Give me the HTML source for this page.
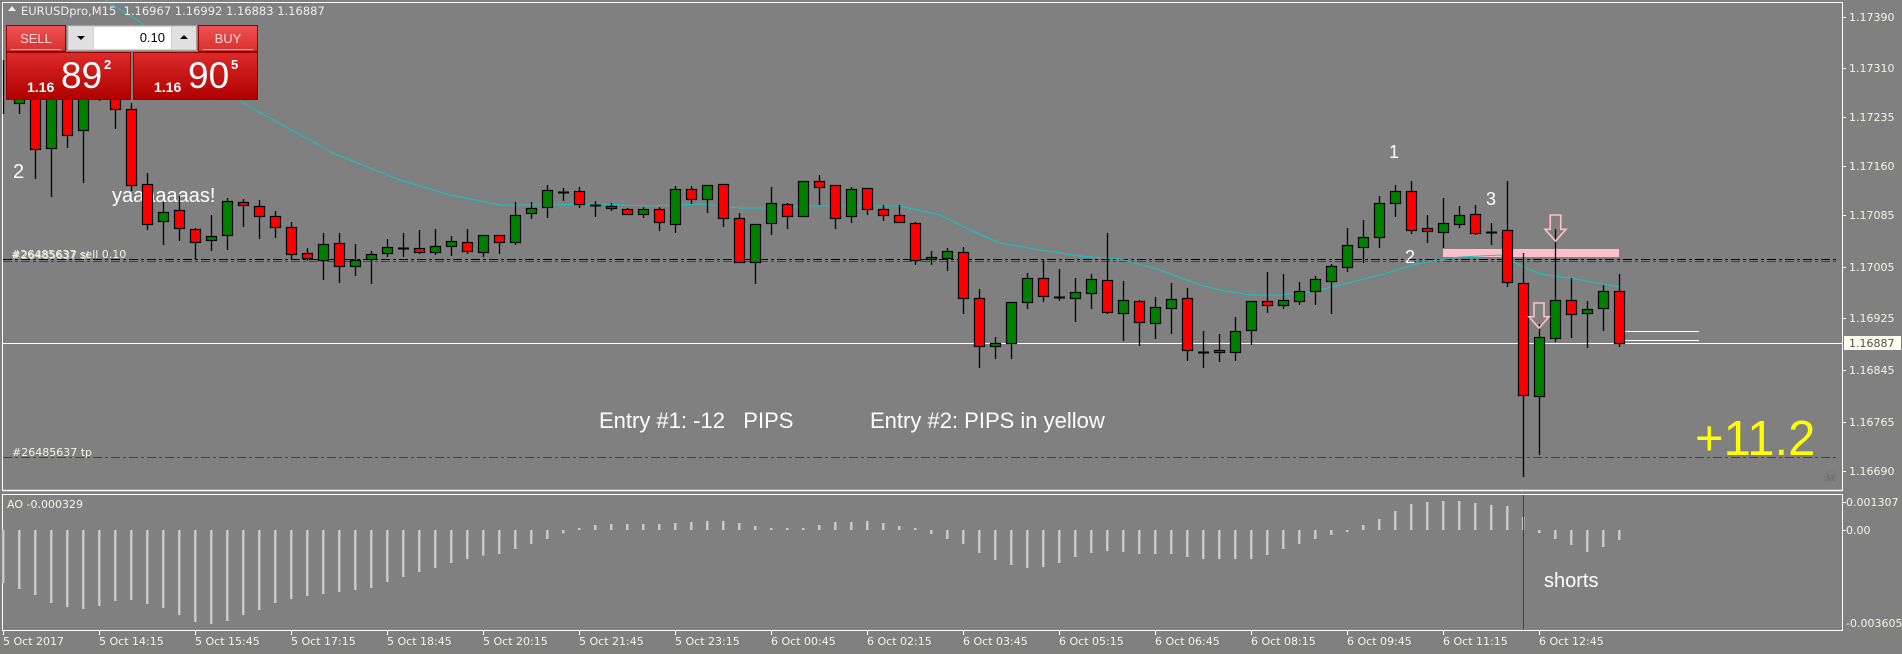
<!DOCTYPE html>
<html><head><meta charset="utf-8"><style>
html,body{margin:0;padding:0;background:#808080;}
body{width:1902px;height:654px;overflow:hidden;position:relative;font-family:"DejaVu Sans","Liberation Sans",sans-serif;}
svg{position:absolute;left:0;top:0;}
.ax{font-family:"DejaVu Sans",sans-serif;font-size:11px;fill:#f4f4e8;}
.w{font-family:"Liberation Sans",Arial,sans-serif;fill:#fff;}
#panel{position:absolute;left:6px;top:25px;width:252px;height:75px;}
.btn{position:absolute;top:0;height:27px;background:linear-gradient(#f05050,#d83030);color:#ffd8d8;font:13px "Liberation Sans",sans-serif;text-align:center;line-height:25px;border:1px solid #a00000;box-sizing:border-box;}
.btn i{position:absolute;left:4px;right:4px;bottom:1px;height:1px;background:#ffb0b0;}
.pr{position:absolute;top:27px;height:48px;background:linear-gradient(#dc2a2a,#b00000);border:1px solid #900;box-sizing:border-box;color:#fff;font-family:"Liberation Sans",sans-serif;}
.pr .s{position:absolute;left:20px;top:26px;font-size:14px;font-weight:bold;}
.pr .b{position:absolute;left:54px;top:2px;font-size:37px;}
.pr .e{position:absolute;left:97px;top:4px;font-size:13px;font-weight:bold;}
</style></head><body>
<svg id="s" width="1902" height="654" xmlns="http://www.w3.org/2000/svg">
<g id="under"></g>
<line x1="2.5" y1="2" x2="2.5" y2="491" stroke="#fff"/>
<line x1="2" y1="2.5" x2="1842" y2="2.5" stroke="#fff"/>
<line x1="1842.5" y1="2" x2="1842.5" y2="491" stroke="#fff"/>
<line x1="2" y1="490.5" x2="1843" y2="490.5" stroke="#fff" stroke-width="1.5"/>
<line x1="2.5" y1="494" x2="2.5" y2="630" stroke="#fff"/>
<line x1="2" y1="494.5" x2="1843" y2="494.5" stroke="#fff"/>
<line x1="1842.5" y1="494" x2="1842.5" y2="630" stroke="#fff"/>
<line x1="2" y1="630.5" x2="1843" y2="630.5" stroke="#fff"/>
<text class="w" x="13" y="178" font-size="20">2</text>
<text class="w" x="112" y="202" font-size="20">yaaaaaaas!</text>
<text class="w" x="1389" y="158" font-size="18">1</text>
<text class="w" x="1486" y="205" font-size="18">3</text>
<text class="w" x="1405" y="263" font-size="18">2</text>
<text class="ax" x="11" y="258" style="font-size:11px">#26485637 sell 0.10</text>
<text class="ax" x="12" y="259" style="font-size:11px;opacity:.8">#26485637 sl</text>
<text class="ax" x="12" y="456">#26485637 tp</text>
<text class="w" x="599" y="428" font-size="22" xml:space="preserve" style="white-space:pre">Entry #1: -12   PIPS</text>
<text class="w" x="870" y="428" font-size="22">Entry #2: PIPS in yellow</text>
<text x="1695" y="455" font-family="Liberation Sans,Arial,sans-serif" font-size="49" fill="#ffff00">+11.2</text>
<text x="1823" y="482" font-size="16" fill="#6a6a6a">☠</text>
<text class="ax" x="7" y="508">AO -0.000329</text>
<text class="w" x="1544" y="587" font-size="20">shorts</text>
<g class="ax">
<text x="1849" y="21">1.17390</text>
<text x="1849" y="72">1.17310</text>
<text x="1849" y="121">1.17235</text>
<text x="1849" y="170">1.17160</text>
<text x="1849" y="219">1.17085</text>
<text x="1849" y="271">1.17005</text>
<text x="1849" y="322">1.16925</text>
<text x="1849" y="374">1.16845</text>
<text x="1849" y="426">1.16765</text>
<text x="1849" y="475">1.16690</text>
<text x="1846" y="506">0.001307</text>
<text x="1846" y="534">0.00</text>
<text x="1846" y="627">-0.003605</text>
</g>
<rect x="1844" y="336" width="57" height="14" fill="#fffff0"/>
<text x="1849" y="347" font-family="DejaVu Sans,sans-serif" font-size="11" fill="#505050">1.16887</text>
<g id="over"></g>
<g class="ax" id="dates"></g>
</svg>

<div style="position:absolute;left:8px;top:6px;width:0;height:0;border-left:4px solid transparent;border-right:4px solid transparent;border-bottom:5px solid #eee;"></div>
<div style="position:absolute;left:21px;top:4px;font:11.5px 'DejaVu Sans',sans-serif;color:#eee;white-space:pre;">EURUSDpro,M15  1.16967 1.16992 1.16883 1.16887</div>

<div id="panel">
 <div class="btn" style="left:0;width:60px;">SELL<i></i></div>
 <div style="position:absolute;left:61px;top:0;width:130px;height:26px;background:#d0d0d0;border:1px solid #a0a0a0;box-sizing:border-box;">
  <div style="position:absolute;left:1px;top:1px;width:24px;height:22px;background:#e0e0e0;"></div>
  <div style="position:absolute;left:9px;top:10px;width:0;height:0;border-left:4px solid transparent;border-right:4px solid transparent;border-top:4px solid #000;"></div>
  <div style="position:absolute;left:26px;top:1px;width:77px;height:22px;background:#fff;font:13px 'Liberation Sans',sans-serif;text-align:right;line-height:22px;box-sizing:border-box;padding-right:6px;">0.10</div>
  <div style="position:absolute;left:104px;top:1px;width:24px;height:22px;background:#e0e0e0;"></div>
  <div style="position:absolute;left:112px;top:9px;width:0;height:0;border-left:4px solid transparent;border-right:4px solid transparent;border-bottom:4px solid #000;"></div>
 </div>
 <div class="btn" style="left:192px;width:60px;">BUY<i></i></div>
 <div class="pr" style="left:0;width:125px;"><span class="s">1.16</span><span class="b">89</span><span class="e">2</span></div>
 <div class="pr" style="left:127px;width:125px;"><span class="s">1.16</span><span class="b">90</span><span class="e">5</span></div>
</div>

<script>
var NS="http://www.w3.org/2000/svg";
function el(p,t,a){var e=document.createElementNS(NS,t);for(var k in a)e.setAttribute(k,a[k]);p.appendChild(e);return e;}
var U=document.getElementById('under'),O=document.getElementById('over'),D=document.getElementById('dates');
el(U,'line',{x1:3,y1:259.5,x2:1836,y2:259.5,stroke:'#000','stroke-dasharray':'9,3,3,3'});
el(U,'line',{x1:3,y1:261.5,x2:1836,y2:261.5,stroke:'#e00000','stroke-dasharray':'9,3,3,3'});
el(U,'line',{x1:3,y1:457.5,x2:1836,y2:457.5,stroke:'#e00000','stroke-dasharray':'9,3,3,3'});
el(U,'line',{x1:3,y1:343.5,x2:1842,y2:343.5,stroke:'#fff'});
el(U,'line',{x1:1625,y1:331.5,x2:1699,y2:331.5,stroke:'#fff'});
el(U,'line',{x1:1625,y1:340.5,x2:1699,y2:340.5,stroke:'#fff'});
el(U,'rect',{x:1443,y:249,width:176,height:8,fill:'#ffc0cb'});
var ma=[[105,0],[137,20],[180,50],[243,103],[333,153],[400,180],[450,195],[500,205],[545,205],[600,204],[650,206],[700,204],[740,208],[780,208],[800,206],[900,206],[940,215],[970,230],[1000,243],[1040,250],[1080,256],[1120,259],[1160,270],[1200,285],[1220,290],[1250,295],[1280,295],[1310,292],[1340,285],[1380,275],[1420,263],[1460,257],[1500,255],[1513,262],[1540,274],[1570,278],[1620,287]];
el(U,'polyline',{points:ma.map(function(p){return p.join(',')}).join(' '),fill:'none',stroke:'#10c8c8','stroke-width':1});
var C=[['w',0,0,60,113],['g',90,103,85,113],['r',85,149,80,178],['g',90,148,85,196],['r',88,135,85,147],['g',90,130,85,182],['r',86,98,82,100],['r',98,109,95,128],['r',109,185,103,190],
['r',184,224,173,229],['g',212,221,202,244],['r',210,228,196,240],['r',229,242,228,259],['g',236,240,215,250],['g',201,235,198,249],['r',202,205,199,226],['r',206,216,200,238],['r',216,227,211,237],['r',227,254,222,258],['r',253,258,248,260],['g',244,260,233,279],['r',243,266,233,282],['g',260,266,244,275],['g',254,259,251,283],['g',247,253,239,256],['d',248,248,233,256],
['r',248,252,230,253],['g',246,252,229,254],['g',241,246,236,255],['r',242,251,229,253],['g',235,252,235,256],['r',235,242,235,253],['g',215,242,202,244],['g',208,213,202,218],['g',190,207,185,217],['d',192,192,188,200],['r',191,204,187,207],['d',205,205,201,216],['r',206,208,203,210],['r',209,214,208,214],['g',209,214,207,217],['r',209,222,207,230],['g',189,224,186,232],['r',189,199,186,203],['g',185,199,185,212],['r',184,218,184,226],['r',218,262,213,262],['g',224,262,224,283],['g',203,223,187,234],['r',204,216,203,228],['g',181,216,181,216],['r',181,187,175,204],
['r',185,218,185,228],['g',189,216,187,222],['r',188,209,188,214],['r',209,215,205,220],['r',215,222,205,222],['r',223,260,222,264],['g',257,259,251,264],['g',251,258,248,270],['r',252,298,247,313],['r',298,346,289,367],['g',343,346,337,358],['g',302,343,302,358],['g',278,302,273,308],['r',278,296,259,301],['d',297,297,269,300],['g',292,298,278,321],['g',279,293,274,308],['r',280,312,233,313],['g',300,313,281,340],['r',301,322,300,345],['g',307,323,297,338],['g',299,308,283,333],['r',298,350,288,360],['d',352,352,331,367],
['g',350,352,334,361],['g',331,352,317,360],['g',301,330,301,344],['r',301,305,272,312],['g',300,305,274,308],['g',291,301,282,304],['g',279,291,276,304],['g',266,281,264,313],['g',245,267,228,271],['g',237,247,220,262],['g',203,237,196,247],['g',191,203,185,216],['r',191,230,181,233],['r',228,231,215,242],['g',223,232,198,247],['g',215,224,206,227],['r',214,233,205,234],['d',232,232,223,244],['r',230,282,181,286],['r',283,395,253,476],['g',337,396,324,454],['g',300,338,229,341],['r',300,314,278,337],['g',309,313,301,347],['g',291,308,285,330],['r',291,343,274,346]];
C.forEach(function(c,i){var x=3+16*i;
 el(O,'line',{x1:x+.5,y1:c[3],x2:x+.5,y2:c[4]+1,stroke:'#000','stroke-width':1.3});
 if(c[0]=='w')return;
 if(c[0]=='d'){el(O,'rect',{x:x-5,y:c[1]-.5,width:11,height:2,fill:'#000'});}
 else{var h=Math.max(c[2]-c[1],2);el(O,'rect',{x:x-4.5,y:c[1]+.5,width:10,height:h,fill:c[0]=='g'?'#008000':'#ff0000',stroke:'#000','stroke-width':1.2});}
});
function arrow(x0,y0,w,h){var m=x0+w/2,sw=w*0.25,hy=y0+h*0.55;
 el(O,'path',{d:'M'+(m-sw)+','+y0+'H'+(m+sw)+'V'+hy+'H'+(x0+w)+'L'+m+','+(y0+h)+'L'+x0+','+hy+'H'+(m-sw)+'Z',fill:'none',stroke:'#ffc0cb','stroke-width':1.6});}
arrow(1545,215,21,26);arrow(1529,303,20,25);
var ao=[53,59,65,73,77,79,76,71,70,74,78,85,92,94,91,85,80,73,69,66,64,62,60,58,52,47,42,38,33,29];
var z=[185,180,165,150,135,118,102,93,90,90,90,90,87,84,81,81,87,96,102,105,105,93,84,84,81,87,96,105,120,135,150,177,198,213,222,219,207,189,177,171,174,180,180,180,189,195,195,195,195,183,165,150,135,123,111,93,75,51,30,24,21,21,27,33,36];
z.forEach(function(v){ao.push((v-108)/3);});
ao=ao.concat([-13,3,9,15,22,17,10]);
ao.forEach(function(v,i){var x=3+16*i;if(Math.abs(v)<1.5)v=v<0?-2:2;
 el(O,'rect',{x:x-1,y:v>0?530:530+v,width:2.5,height:Math.abs(v),fill:'#c8c8c8'});});
el(O,'line',{x1:1523.5,y1:495,x2:1523.5,y2:630,stroke:'#e00000'});
[17,68,117,166,215,267,318,370,422,471,502,530].forEach(function(y){el(O,'line',{x1:1842,y1:y+.5,x2:1846,y2:y+.5,stroke:'#fff'});});
var L=['5 Oct 2017','5 Oct 14:15','5 Oct 15:45','5 Oct 17:15','5 Oct 18:45','5 Oct 20:15','5 Oct 21:45','5 Oct 23:15','6 Oct 00:45','6 Oct 02:15','6 Oct 03:45','6 Oct 05:15','6 Oct 06:45','6 Oct 08:15','6 Oct 09:45','6 Oct 11:15','6 Oct 12:45'];
L.forEach(function(t,k){var x=3+96*k;el(O,'line',{x1:x+.5,y1:630,x2:x+.5,y2:635,stroke:'#fff'});
 var e=el(D,'text',{x:x,y:645});e.textContent=t;});
</script>
</body></html>
